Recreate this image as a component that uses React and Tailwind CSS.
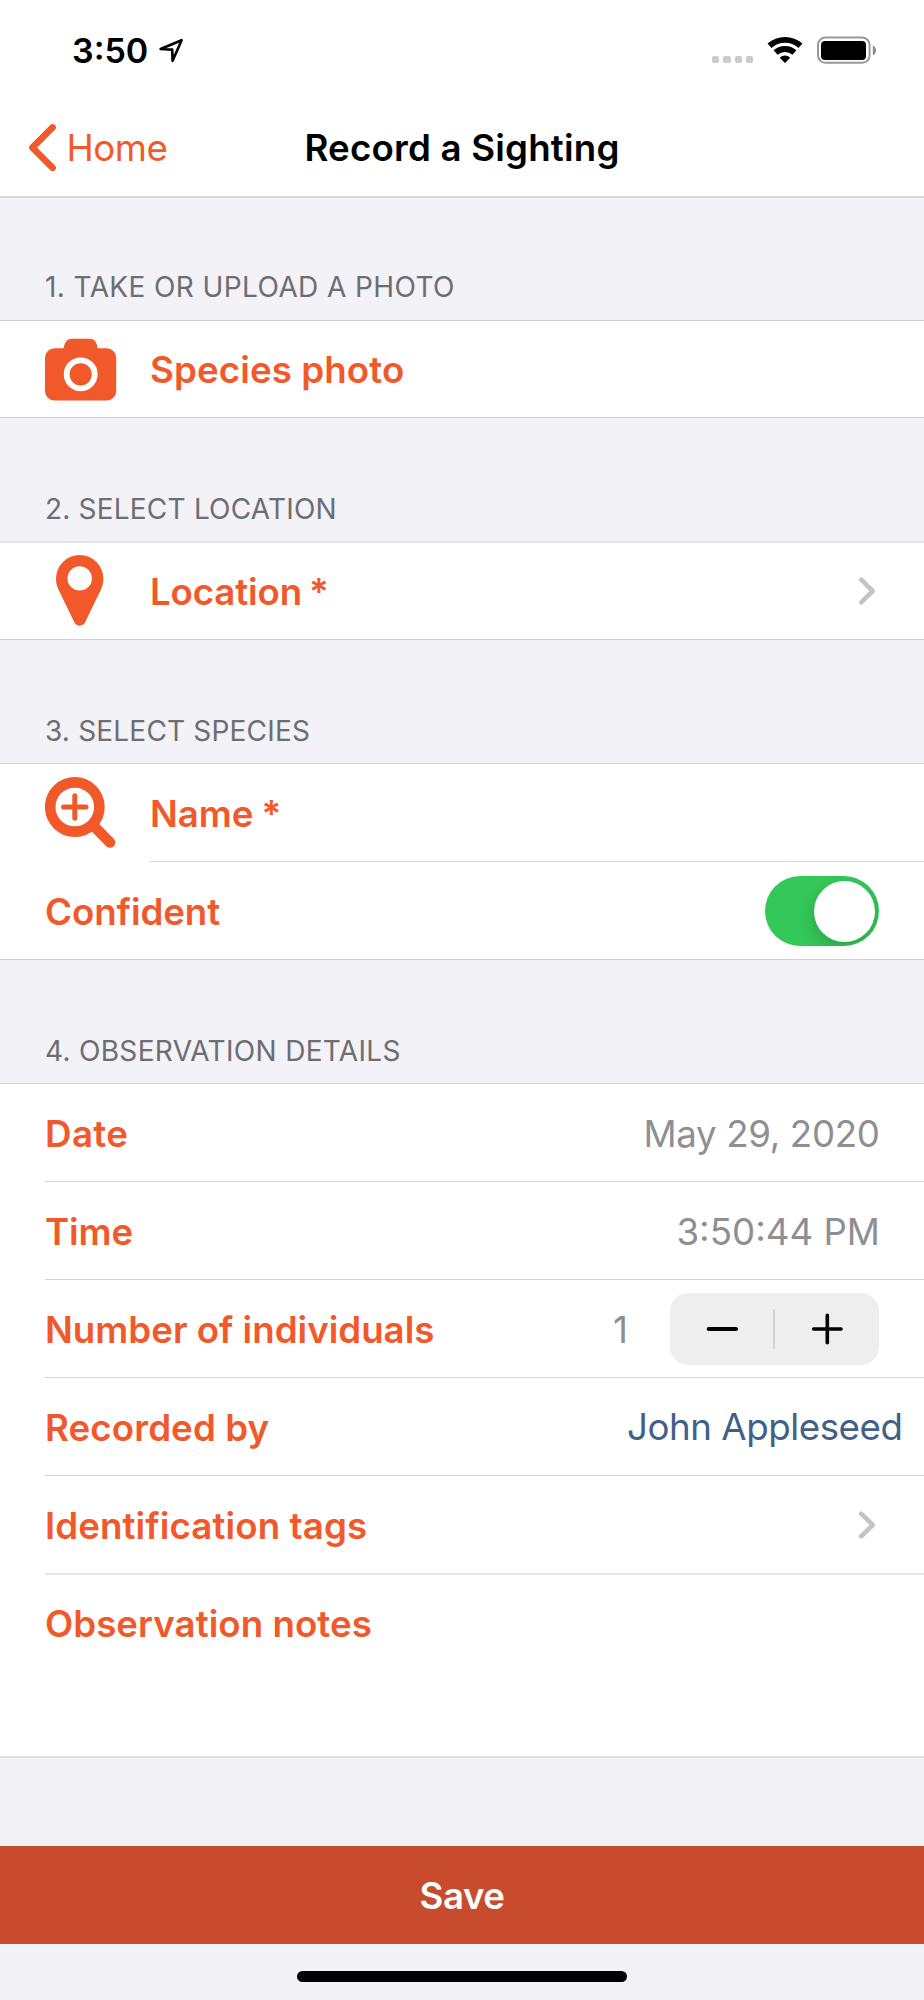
import React from "react";

function StatusBar() {
  return (
    <div className="flex h-[100px] items-start">
      <span className="mt-[30px] ml-[72px] text-[34px] leading-[41px] font-semibold">3:50</span>
      <svg className="mt-[38px] ml-[10px] h-[26px] w-[26px]" viewBox="158 38 26 26" fill="none" stroke="currentColor" strokeWidth="2.6" strokeLinejoin="round">
        <path d="M160.6 49 L181.6 40.2 L172.6 60.8 L172.2 49.6 Z" />
      </svg>
      <div className="mt-[56px] ml-auto flex gap-[4px]">
        <i className="h-[7px] w-[7.2px] rounded-[2px] bg-[#cccccc]" />
        <i className="h-[7px] w-[7.2px] rounded-[2px] bg-[#cccccc]" />
        <i className="h-[7px] w-[7.2px] rounded-[2px] bg-[#cccccc]" />
        <i className="h-[7px] w-[7.2px] rounded-[2px] bg-[#cccccc]" />
      </div>
      <svg className="mt-[36px] ml-[13px] h-[28px] w-[38px]" viewBox="-19 -27 38 28" fill="none" stroke="currentColor">
        <path strokeWidth="5.9" d="M-15.5 -17.2 A23.2 23.2 0 0 1 15.5 -17.2" />
        <path strokeWidth="6" d="M-9.4 -10.5 A14.1 14.1 0 0 1 9.4 -10.5" />
        <path fill="currentColor" stroke="none" d="M-5.2 -5.3 A7.4 7.4 0 0 1 5.2 -5.3 L0.4 -0.3 Q0 0 -0.4 -0.3 Z" />
      </svg>
      <svg className="mt-[36px] mr-[46px] ml-[12px] h-[28px] w-[62px]" viewBox="816 36 62 28">
        <rect x="818" y="37.6" width="51.6" height="25.2" rx="7.5" fill="none" stroke="#999999" strokeWidth="2" />
        <rect x="821" y="41" width="45" height="19" rx="4" />
        <path d="M872.8 45.6 Q876 47 876 50.4 Q876 53.8 872.8 55.2 Z" fill="#8c8c8c" />
      </svg>
    </div>
  );
}

function NavBar() {
  return (
    <div className="grid h-[96px] grid-cols-[1fr_auto_1fr] items-start pt-[20px]">
      <a className="flex items-start text-[#f1592a]">
        <svg className="mt-[4px] ml-[28px] h-[48px] w-[30px]" viewBox="28 124 30 48" fill="none" stroke="currentColor" strokeWidth="6.6" strokeLinecap="round" strokeLinejoin="round">
          <path d="M52.6 127.4 L32.4 147.6 L52.6 167.8" />
        </svg>
        <span className="mt-[5px] ml-[8.5px] text-[36.7px] leading-[45px] tracking-[-0.5px]">Home</span>
      </a>
      <h1 className="mt-[5px] text-[36.7px] leading-[45px] font-semibold tracking-[0.19px]">Record a Sighting</h1>
    </div>
  );
}

function SectionHeader({ children, className }) {
  return (
    <h2 className={"flex items-end pl-[45px] text-[28px] leading-[34px] text-[#6d6d72] " + className}>{children}</h2>
  );
}

function Label({ children, className = "" }) {
  return (
    <span className={"text-[36.7px] leading-[45px] font-semibold whitespace-nowrap text-[#f1592a] " + className}>{children}</span>
  );
}

function Value({ children, className = "" }) {
  return <span className={"ml-auto text-[36.7px] leading-[45px] whitespace-nowrap " + className}>{children}</span>;
}

function Disclosure() {
  return (
    <svg className="-mt-px mr-[3px] ml-auto h-[30px] w-[20px]" viewBox="0 0 20 30" fill="none" stroke="#c4c4c7" strokeWidth="4.6" strokeLinecap="round" strokeLinejoin="round">
      <path d="M5.2 3.6 L16.7 15 L5.2 26.4" />
    </svg>
  );
}

function Row({ children, className = "h-[97px] pt-[2px]" }) {
  return <div className={"flex items-center bg-white pr-[45px] pl-[45px] " + className}>{children}</div>;
}

function Separator({ className = "pl-[45px]" }) {
  return (
    <div className={"bg-white " + className}>
      <div className="h-px bg-[#d4d4d7]" />
    </div>
  );
}

function CameraIcon() {
  return (
    <svg className="-mt-px h-[96px] w-[72px] text-[#f1592a]" viewBox="0 0 72 96" fill="currentColor">
      <rect x="0" y="27.3" width="71.2" height="52.2" rx="9.5" />
      <path d="M17.5 28.5 Q18.7 27.5 19 25.5 C20 20.5 22.5 17.7 26.5 17.7 H45 C49 17.7 51.5 20.5 52.3 25.5 Q52.6 27.5 53.8 28.5 Z" />
      <circle cx="35.7" cy="53.3" r="14" fill="none" stroke="#fff" strokeWidth="5.8" />
    </svg>
  );
}

function PinIcon() {
  return (
    <svg className="-mt-px h-[96px] w-[72px] text-[#f1592a]" viewBox="0 0 72 96" fill="currentColor">
      <path fillRule="evenodd" d="M34.7 12 A23.7 23.7 0 0 0 11 35.7 C11 39.5 11.8 43 13.3 46.2 L29.3 79.2 C31.5 83.8 37.9 83.8 40.1 79.2 L56.1 46.2 C57.6 43 58.4 39.5 58.4 35.7 A23.7 23.7 0 0 0 34.7 12 Z M34.7 23.2 A12.2 12.2 0 1 1 34.7 47.6 A12.2 12.2 0 1 1 34.7 23.2 Z" />
    </svg>
  );
}

function SearchIcon() {
  return (
    <svg className="-mt-[2px] h-[97px] w-[72px] text-[#f1592a]" viewBox="0 0 72 97" fill="none" stroke="currentColor">
      <circle cx="29.8" cy="43" r="24.6" strokeWidth="10.6" />
      <path d="M48 61.3 L65 78.4" strokeWidth="10.6" strokeLinecap="round" />
      <path d="M18.6 43 H41 M29.8 31.8 V54.2" strokeWidth="5" strokeLinecap="round" />
    </svg>
  );
}

function Toggle() {
  return (
    <span className="-mt-px ml-auto flex h-[70px] w-[114px] items-center justify-end overflow-hidden rounded-full bg-[#34c759] pr-[4.5px]">
      <span className="h-[61px] w-[61px] rounded-full bg-white shadow-[0_6px_16px_rgba(0,0,0,0.18)]" />
    </span>
  );
}

function Stepper() {
  return (
    <span className="-mt-[2px] ml-[42px] flex h-[72px] w-[209px] items-center justify-center rounded-[18px] bg-[#eeeeef]">
      <svg className="h-[36px] w-[103px]" viewBox="0 0 103 36" stroke="#000" strokeWidth="4" strokeLinecap="round">
        <path d="M38.7 18 H66" />
      </svg>
      <span className="h-[40px] w-[2px] rounded-full bg-[#d3d3d6]" />
      <svg className="h-[36px] w-[104px]" viewBox="0 0 104 36" stroke="#000" strokeWidth="3.6" strokeLinecap="round">
        <path d="M38.6 18 H66 M52.3 4.3 V31.7" />
      </svg>
    </span>
  );
}

export default function App() {
  return (
    <div className="flex h-[2000px] w-[924px] flex-col bg-[#f2f2f7] font-['Inter',sans-serif] text-black">
      <header className="border-b-2 border-[#d8d8da] bg-white">
        <StatusBar />
        <NavBar />
      </header>

      <SectionHeader className="h-[122px] pb-[16px] tracking-[0.4px]">1. TAKE OR UPLOAD A PHOTO</SectionHeader>
      <section className="border-y border-[#d0d0d5]">
        <Row className="h-[96px] pt-px">
          <CameraIcon />
          <Label className="ml-[33px] tracking-[0.1px]">Species photo</Label>
        </Row>
      </section>

      <SectionHeader className="h-[123px] pb-[15px] tracking-[0.2px]">2. SELECT LOCATION</SectionHeader>
      <section className="border-t-2 border-b border-t-[#e3e3e6] border-b-[#d0d0d3]">
        <Row className="h-[96px] pt-px">
          <PinIcon />
          <Label className="ml-[33px] tracking-[-0.15px] [word-spacing:-2px]">Location *</Label>
          <Disclosure />
        </Row>
      </section>

      <SectionHeader className="h-[123px] pb-[15px] tracking-[0.19px]">3. SELECT SPECIES</SectionHeader>
      <section className="border-y border-[#d0d0d5]">
        <Row>
          <SearchIcon />
          <Label className="ml-[33px] tracking-[-0.1px] [word-spacing:-1px]">Name *</Label>
        </Row>
        <Separator className="pl-[150px]" />
        <Row>
          <Label className="tracking-[-0.1px]">Confident</Label>
          <Toggle />
        </Row>
      </section>

      <SectionHeader className="h-[123px] pb-[15px] tracking-[0.31px]">4. OBSERVATION DETAILS</SectionHeader>
      <section className="border-t border-b-2 border-t-[#d0d0d5] border-b-[#e0e0e2]">
        <Row>
          <Label className="tracking-[0.4px]">Date</Label>
          <Value className="-mr-[0.5px] tracking-[-0.35px] text-[#8e8e93]">May 29, 2020</Value>
        </Row>
        <Separator />
        <Row>
          <Label className="tracking-[-0.1px]">Time</Label>
          <Value className="-mr-px text-[#8e8e93]">3:50:44 PM</Value>
        </Row>
        <Separator />
        <Row>
          <Label>Number of individuals</Label>
          <Value className="text-[#8e8e93]">1</Value>
          <Stepper />
        </Row>
        <Separator />
        <Row>
          <Label className="tracking-[0.1px]">Recorded by</Label>
          <Value className="-mt-[2px] -mr-[23.5px] tracking-[-0.44px] text-[#425f87]">John Appleseed</Value>
        </Row>
        <Separator />
        <Row>
          <Label className="tracking-[0.09px]">Identification tags</Label>
          <Disclosure />
        </Row>
        <div className="bg-white pl-[45px]">
          <div className="h-[2px] bg-[#e6e6e8]" />
        </div>
        <div className="h-[181px] bg-white pt-[26px] pl-[45px]">
          <Label className="tracking-[0.04px]">Observation notes</Label>
        </div>
      </section>

      <button className="mt-[88px] flex h-[98px] items-center justify-center bg-[#c74b2c] pt-px text-[36.7px] leading-[45px] font-semibold tracking-[-0.5px] text-white">
        Save
      </button>
      <div className="mx-auto mt-[27px] h-[11px] w-[330px] rounded-full bg-black" />
    </div>
  );
}
